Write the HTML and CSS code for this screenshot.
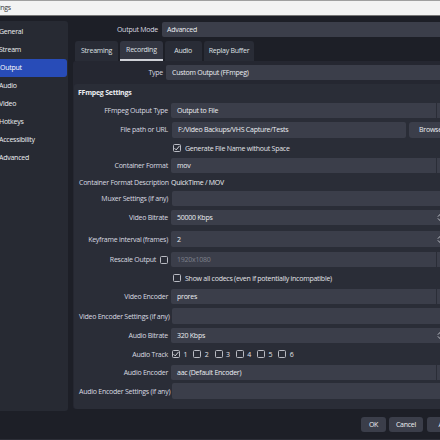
FILE: index.html
```html
<!DOCTYPE html>
<html lang="en">
<head>
  <meta charset="UTF-8">
  <title>Settings</title>
  <link rel="stylesheet" href="styles.css">
</head>
<body>
  <div class="titlebar"><span class="title">Settings</span></div>

  <div class="window">
    <nav class="sidebar">
      <div class="nav-item">General</div>
      <div class="nav-item">Stream</div>
      <div class="nav-item active">Output</div>
      <div class="nav-item">Audio</div>
      <div class="nav-item">Video</div>
      <div class="nav-item">Hotkeys</div>
      <div class="nav-item">Accessibility</div>
      <div class="nav-item">Advanced</div>
    </nav>

    <main class="content">
      <div class="mode-row">
        <label>Output Mode</label>
        <div class="field">Advanced</div>
      </div>

      <div class="tabs">
        <div class="tab">Streaming</div>
        <div class="tab active">Recording</div>
        <div class="tab">Audio</div>
        <div class="tab">Replay Buffer</div>
      </div>

      <div class="tabpane">
        <div class="type-row">
          <label>Type</label>
          <div class="field">Custom Output (FFmpeg)</div>
        </div>

        <section class="group">
          <h3>FFmpeg Settings</h3>
          <div class="form">
            <label>FFmpeg Output Type</label>
            <div class="field combo"><span class="val">Output to File</span><span class="drop"></span></div>

            <label>File path or URL</label>
            <div class="path-row">
              <div class="field shift"><span class="val">F:/Video Backups/VHS Capture/Tests</span></div>
              <div class="btn browse">Browse</div>
            </div>

            <div class="checkline wide"><span class="check on"><svg viewBox="0 0 8 8"><path d="M1.5 4.2 L3.2 5.9 L6.6 1.8" /></svg></span>Generate File Name without Space</div>

            <label>Container Format</label>
            <div class="field combo"><span class="val">mov</span><span class="drop"></span></div>

            <label>Container Format Description</label>
            <div class="plain">QuickTime / MOV</div>

            <label>Muxer Settings (if any)</label>
            <div class="field shift"></div>

            <label>Video Bitrate</label>
            <div class="field spin"><span class="val">50000 Kbps</span><span class="arrows"><svg viewBox="0 0 8 12"><path d="M1 5 L4 2 L7 5 M1 7 L4 10 L7 7" /></svg></span></div>

            <label>Keyframe interval (frames)</label>
            <div class="field spin tall"><span class="val">2</span><span class="arrows"><svg viewBox="0 0 8 12"><path d="M1 5 L4 2 L7 5 M1 7 L4 10 L7 7" /></svg></span></div>

            <label class="with-check">Rescale Output <span class="check"></span></label>
            <div class="field combo disabled"><span class="val">1920x1080</span><span class="drop"></span></div>

            <div class="checkline wide"><span class="check"></span>Show all codecs (even if potentially incompatible)</div>

            <label>Video Encoder</label>
            <div class="field combo"><span class="val">prores</span><span class="drop"></span></div>

            <label>Video Encoder Settings (if any)</label>
            <div class="field shift tall"></div>

            <label>Audio Bitrate</label>
            <div class="field spin"><span class="val">320 Kbps</span><span class="arrows"><svg viewBox="0 0 8 12"><path d="M1 5 L4 2 L7 5 M1 7 L4 10 L7 7" /></svg></span></div>

            <label>Audio Track</label>
            <div class="tracks">
              <span class="track"><span class="check on"><svg viewBox="0 0 8 8"><path d="M1.5 4.2 L3.2 5.9 L6.6 1.8" /></svg></span>1</span>
              <span class="track"><span class="check"></span>2</span>
              <span class="track"><span class="check"></span>3</span>
              <span class="track"><span class="check"></span>4</span>
              <span class="track"><span class="check"></span>5</span>
              <span class="track"><span class="check"></span>6</span>
            </div>

            <label>Audio Encoder</label>
            <div class="field combo"><span class="val">aac (Default Encoder)</span><span class="drop"></span></div>

            <label>Audio Encoder Settings (if any)</label>
            <div class="field shift tall"></div>
          </div>
        </section>
      </div>
    </main>
  </div>

  <footer class="buttons">
    <div class="btn">OK</div>
    <div class="btn">Cancel</div>
    <div class="btn apply">Apply</div>
  </footer>
</body>
</html>
```

FILE: styles.css
```css
* {
  box-sizing: border-box;
}

html,
body {
  margin: 0;
  width: 440px;
  height: 440px;
  overflow: hidden;
}

body {
  background-color: #1d1f27;
  color: #e6e7ea;
  font-family: "Open Sans", "DejaVu Sans", sans-serif;
  font-size: 7px;
  letter-spacing: -0.25px;
}

label {
  color: #d9dae0;
  text-align: right;
  white-space: nowrap;
}

.titlebar {
  height: 16px;
  background-color: #f3f3f3;
  border-top: 1px solid #a0a0a0;
  border-bottom: 1px solid #777;
  color: #3a3a3a;
  line-height: 14px;
}

.title {
  display: inline-block;
  margin-left: -13px;
}

.window {
  display: flex;
  gap: 5px;
  width: 472px;
  height: 395px;
  padding-top: 5px;
}

/* left list */
.sidebar {
  width: 68px;
  flex-shrink: 0;
  height: 390px;
  padding: 2px 1px 0 0;
  background-color: #272a33;
  border-radius: 0 3px 3px 0;
}

.nav-item {
  height: 18px;
  line-height: 18px;
  margin-left: -1px;
  color: #eceef2;
  white-space: nowrap;
}

.nav-item.active {
  margin-left: 0;
  background-color: #284cb8;
  border-radius: 0 3px 3px 0;
  color: #fff;
}

.content {
  flex: 1;
  display: flex;
  flex-direction: column;
}

.field {
  display: flex;
  align-items: center;
  height: 15px;
  padding-left: 6px;
  background-color: #3b3e4a;
  border-radius: 2px;
  color: #eceef2;
  white-space: nowrap;
}

.field .val {
  flex: 1;
}

.mode-row {
  display: grid;
  grid-template-columns: 85px 1fr;
  column-gap: 4px;
  align-items: center;
  margin-top: 1px;
  height: 15px;
}

.mode-row .field {
  padding-left: 5px;
}

.tabs {
  display: flex;
  gap: 2px;
  margin-top: 4px;
  padding-left: 2px;
  height: 20px;
}

.tab {
  min-width: 37px;
  padding: 0 6px;
  line-height: 19px;
  text-align: center;
  background-color: #292c36;
  border-radius: 3px 3px 0 0;
  color: #dfe0e5;
}

.tab.active {
  background-color: #333642;
  border-bottom: 2px solid #d0d2d8;
  line-height: 17px;
}

.tab:last-child {
  padding: 0 5px;
}

.tabpane {
  height: 348px;
  padding: 4px 2px 0 1px;
  background-color: #252731;
  border-radius: 3px;
}

.type-row {
  display: grid;
  grid-template-columns: 89px 1fr;
  column-gap: 3px;
  align-items: center;
  height: 15px;
}

.group {
  margin-top: 4px;
  height: 325px;
  background-color: #2a2d37;
  border-radius: 3px;
}

.group h3 {
  margin: 0;
  height: 16px;
  padding-left: 4px;
  line-height: 17px;
  font-size: 7px;
  font-weight: bold;
  color: #eceef2;
}

.form {
  display: grid;
  grid-template-columns: 89px 1fr;
  grid-template-rows: 20px 19px 18px 17px 16px 17px 21px 22px 19px 18px 19px 20px 19px 18px 18px 20px;
  column-gap: 3px;
  align-items: center;
  padding: 0 18px 0 5px;
}

.form .wide {
  grid-column: 2;
}

.form .shift {
  margin-left: 1px;
}

.form .tall {
  height: 16px;
}

.combo .drop {
  width: 16px;
  height: 100%;
  border-left: 1px solid #2a2d37;
}

.combo.disabled {
  color: #7d808a;
}

.spin .arrows {
  width: 16px;
  height: 100%;
  display: flex;
  align-items: center;
  padding-left: 1px;
}

.spin svg {
  width: 7px;
  height: 11px;
  fill: none;
  stroke: #c5c7ce;
  stroke-width: 1.1;
}

.plain {
  color: #eceef2;
  white-space: nowrap;
}

.path-row {
  display: flex;
  gap: 3px;
}

.path-row .field {
  flex: 1;
  height: 16px;
}

.btn {
  height: 15px;
  line-height: 15px;
  text-align: center;
  background-color: #3b3e4a;
  border-radius: 3px;
  color: #eceef2;
}

.browse {
  width: 43px;
  height: 16px;
  line-height: 16px;
}

.check {
  display: inline-flex;
  width: 8px;
  height: 8px;
  border: 1px solid #b9bbc3;
  border-radius: 1.5px;
  flex-shrink: 0;
}

.check svg {
  width: 8px;
  height: 8px;
  margin: -1px;
  fill: none;
  stroke: #e4e5ea;
  stroke-width: 0.9;
}

.checkline {
  display: flex;
  align-items: center;
  gap: 4px;
  padding-left: 2px;
  white-space: nowrap;
  color: #e2e3e8;
}

.with-check {
  display: flex;
  align-items: center;
  justify-content: flex-end;
  gap: 4px;
}

.tracks {
  display: flex;
  gap: 6px;
  padding-left: 1px;
}

.track {
  display: flex;
  align-items: center;
  gap: 3.5px;
  color: #e2e3e8;
}

.buttons {
  display: flex;
  justify-content: flex-end;
  gap: 3px;
  width: 440px;
  height: 29px;
  padding-top: 6px;
  border-bottom: 1px solid #2c2e37;
}

.buttons .btn:nth-child(1) {
  width: 25px;
}

.buttons .btn:nth-child(2) {
  width: 34px;
}

.buttons .apply {
  width: 40px;
  margin-left: 1px;
  margin-right: -27px;
  flex-shrink: 0;
}
```
